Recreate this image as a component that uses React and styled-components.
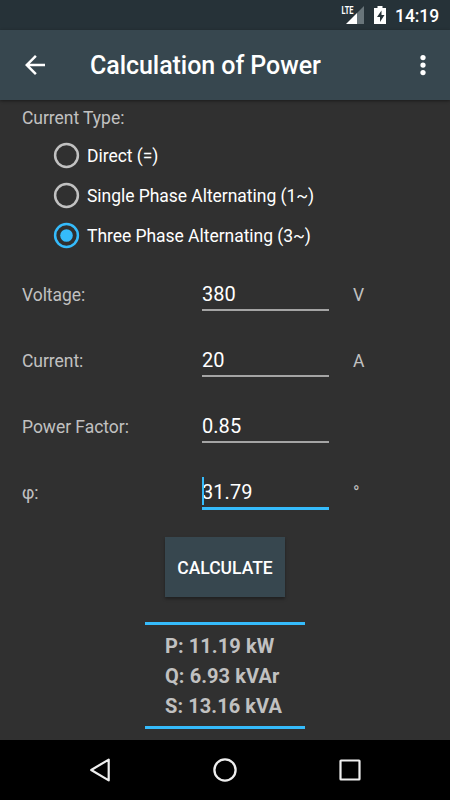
import React, { useState } from "react";
import styled, { createGlobalStyle } from "styled-components";

const GlobalStyle = createGlobalStyle`
  * { box-sizing: border-box; }
  body { margin: 0; background: #303030; font-family: Roboto, sans-serif; }
`;

const accent = "#35bbfb";

const Screen = styled.div`
  width: 450px;
  height: 800px;
  display: flex;
  flex-direction: column;
  overflow: hidden;
  background: #303030;
  color: #fff;
`;

const StatusBar = styled.div`
  height: 30px;
  flex: none;
  display: flex;
  align-items: center;
  justify-content: flex-end;
  background: #263238;
`;

const StatusIcons = styled.svg`
  width: 50px;
  height: 30px;
  flex: none;
`;

const NetworkLabel = styled.text`
  font: 700 11px Roboto, sans-serif;
  fill: #fff;
`;

const Clock = styled.span`
  width: 60px;
  padding: 1px 0 0 5px;
  font-size: 17.5px;
  font-weight: 500;
  line-height: 30px;
  letter-spacing: -0.05px;
`;

const Toolbar = styled.header`
  height: 70px;
  flex: none;
  display: flex;
  align-items: center;
  padding: 0 12.5px 0 20px;
  background: #37474f;
  box-shadow: 0 1px 3px rgba(0, 0, 0, 0.45);
  z-index: 1;
`;

const Title = styled.h1`
  flex: 1;
  margin: 2px 0 0 40px;
  font-size: 25px;
  font-weight: 500;
  line-height: 30px;
  letter-spacing: -0.06px;
`;

const IconButton = styled.button`
  width: 30px;
  height: 30px;
  padding: 0;
  border: 0;
  background: none;
  display: flex;
  svg { display: block; }
`;

const Content = styled.main`
  flex: 1;
  padding: 7px 22px 0;
  display: flex;
  flex-direction: column;
`;

const Label = styled.span`
  color: #c1c1c1;
  font-size: 17.5px;
  line-height: 22px;
  letter-spacing: -0.04px;
`;

const RadioGroup = styled.div`
  display: flex;
  flex-direction: column;
  padding: 6px 0 0 31px;
`;

const RadioRow = styled.label`
  height: 40px;
  display: flex;
  align-items: center;
  gap: 7px;
  font-size: 17.5px;
  line-height: 22px;
  letter-spacing: -0.04px;
`;

const RadioMark = styled.svg`
  width: 27px;
  height: 27px;
`;

const RadioText = styled.span`
  padding-top: 2px;
`;

const Fields = styled.div`
  display: grid;
  grid-template-rows: repeat(4, 66px);
  padding-top: 6px;
`;

const FieldRow = styled.div`
  display: grid;
  grid-template-columns: 179.5px 127.5px auto;
  align-items: center;

  > span { padding-top: 2px; }
`;

const InputWrap = styled.div`
  position: relative;
  height: 35px;
  display: flex;
  flex-direction: column;
  padding-top: 3px;
`;

const Underline = styled.div`
  flex: none;
  height: ${(p) => (p.$active ? "3px" : "2px")};
  background: ${(p) => (p.$active ? accent : "#a4a4a4")};
`;

const Input = styled.input`
  flex: none;
  width: 100%;
  height: 29px;
  padding: 0 0 0 0.5px;
  border: 0;
  outline: 0;
  background: none;
  color: #fff;
  font: 400 20px/29px Roboto, sans-serif;
  letter-spacing: 0.05px;
`;

const Caret = styled.i`
  position: absolute;
  left: 0;
  top: 2px;
  width: 2.5px;
  height: 28px;
  background: ${accent};
`;

const Unit = styled(Label)`
  padding-left: 24px;
`;

const CalculateButton = styled.button`
  align-self: center;
  width: 120px;
  height: 60px;
  margin-top: 12px;
  padding: 2px 0 0;
  border: 0;
  background: #37474f;
  color: #fff;
  font: 500 17.5px Roboto, sans-serif;
  box-shadow: 0 2px 3px rgba(0, 0, 0, 0.35);
`;

const Results = styled.section`
  align-self: center;
  width: 160px;
  margin-top: 25px;
  padding: 6px 0 5px 20px;
  border-top: 3px solid ${accent};
  border-bottom: 3px solid ${accent};
`;

const ResultLine = styled.div`
  color: #c1c1c1;
  font-size: 20px;
  font-weight: 700;
  line-height: 30px;
  letter-spacing: 0.08px;
  white-space: nowrap;
`;

const NavigationBar = styled.nav`
  height: 60px;
  flex: none;
  display: flex;
  align-items: center;
  justify-content: center;
  gap: 95px;
  background: #000;
`;

const types = ["Direct (=)", "Single Phase Alternating (1~)", "Three Phase Alternating (3~)"];
const fields = [
  { label: "Voltage:", value: "380", unit: "V" },
  { label: "Current:", value: "20", unit: "A" },
  { label: "Power Factor:", value: "0.85", unit: "" },
  { label: "φ:", value: "31.79", unit: "°", active: true },
];
const results = ["P: 11.19 kW", "Q: 6.93 kVAr", "S: 13.16 kVA"];

function Radio({ checked }) {
  const color = checked ? accent : "#c1c1c1";
  return (
    <RadioMark viewBox="0 0 27 27">
      <circle cx="13.5" cy="13.5" r="11.4" fill="none" stroke={color} strokeWidth="2.5" />
      {checked && <circle cx="13.5" cy="13.5" r="6.3" fill={color} />}
    </RadioMark>
  );
}

export default function App() {
  const [selected, setSelected] = useState(2);
  return (
    <>
      <GlobalStyle />
      <Screen>
        <StatusBar>
          <StatusIcons viewBox="340 0 50 30">
            <path d="M364 6v18h-7V13z" fill="#69757a" />
            <path d="M357 13v11h-11z" fill="#fff" />
            <NetworkLabel x="341.5" y="14" textLength="12" lengthAdjust="spacingAndGlyphs">LTE</NetworkLabel>
            <path d="M377.5 6h5v2h3.5v16h-12V8h3.5z" fill="#fff" />
            <path d="M381.5 10.5l-4.5 6.5h3v5l4.5-7h-3z" fill="#263238" />
          </StatusIcons>
          <Clock>14:19</Clock>
        </StatusBar>
        <Toolbar>
          <IconButton aria-label="Back">
            <svg width="30" height="30" viewBox="0 0 24 24" fill="#fff">
              <path d="M20 11H7.83l5.59-5.59L12 4l-8 8 8 8 1.41-1.41L7.83 13H20v-2z" />
            </svg>
          </IconButton>
          <Title>Calculation of Power</Title>
          <IconButton aria-label="More options">
            <svg width="30" height="30" viewBox="0 0 24 24" fill="#fff">
              <circle cx="12" cy="6" r="2.1" />
              <circle cx="12" cy="12" r="2.1" />
              <circle cx="12" cy="18" r="2.1" />
            </svg>
          </IconButton>
        </Toolbar>
        <Content>
          <Label>Current Type:</Label>
          <RadioGroup>
            {types.map((type, i) => (
              <RadioRow key={type} onClick={() => setSelected(i)}>
                <Radio checked={i === selected} />
                <RadioText>{type}</RadioText>
              </RadioRow>
            ))}
          </RadioGroup>
          <Fields>
            {fields.map((f) => (
              <FieldRow key={f.label}>
                <Label>{f.label}</Label>
                <InputWrap>
                  <Input defaultValue={f.value} aria-label={f.label} />
                  <Underline $active={f.active} />
                  {f.active && <Caret />}
                </InputWrap>
                <Unit>{f.unit}</Unit>
              </FieldRow>
            ))}
          </Fields>
          <CalculateButton>CALCULATE</CalculateButton>
          <Results>
            {results.map((line) => (
              <ResultLine key={line}>{line}</ResultLine>
            ))}
          </Results>
        </Content>
        <NavigationBar>
          <svg width="30" height="30" viewBox="0 0 30 30" fill="none" stroke="#eee" strokeWidth="2.2" strokeLinejoin="round">
            <path d="M23.7 4.6v20.8L6.2 15z" />
          </svg>
          <svg width="30" height="30" viewBox="0 0 30 30" fill="none" stroke="#eee" strokeWidth="2.3">
            <circle cx="15" cy="15" r="10.6" />
          </svg>
          <svg width="30" height="30" viewBox="0 0 30 30" fill="none" stroke="#eee" strokeWidth="2.2">
            <rect x="5.5" y="5.5" width="19" height="19" rx="0.5" />
          </svg>
        </NavigationBar>
      </Screen>
    </>
  );
}
